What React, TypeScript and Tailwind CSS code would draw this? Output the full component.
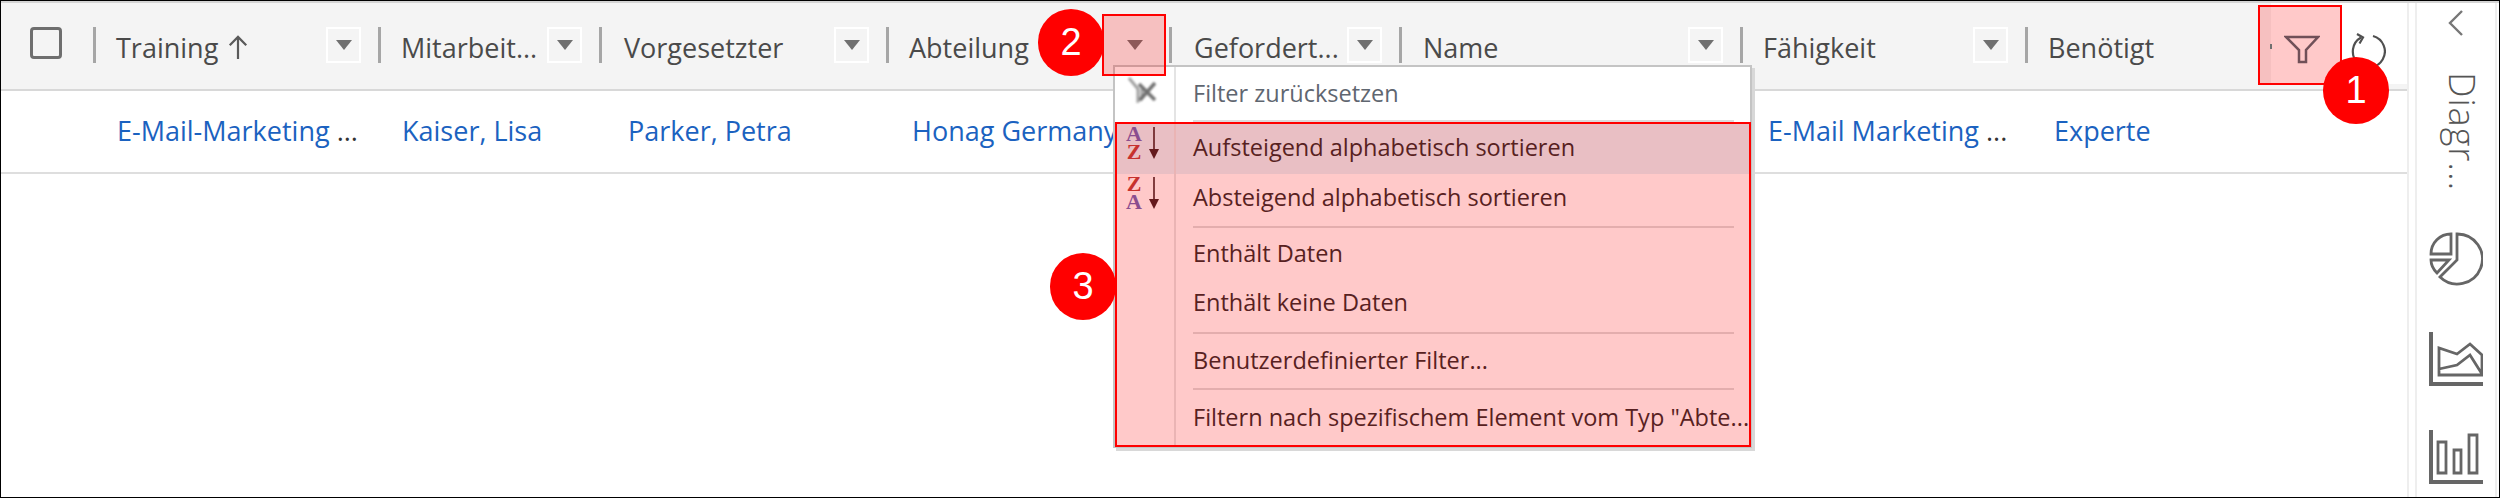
const columns = [
  { label: 'Training', width: 'w-[285px]', sorted: true, labelClass: 'ml-[20px]' },
  { label: 'Mitarbeit...', width: 'w-[221px]', labelClass: 'ml-[20px]' },
  { label: 'Vorgesetzter', width: 'w-[287px]', labelClass: 'ml-[22px]' },
  { label: 'Abteilung', width: 'w-[283px]', labelClass: 'ml-[20px]', noButton: true },
  { label: 'Gefordert...', width: 'w-[230px]', labelClass: 'ml-[22px]' },
  { label: 'Name', width: 'w-[341px]', labelClass: 'ml-[21px]' },
  { label: 'Fähigkeit', width: 'w-[285px]', labelClass: 'ml-[20px]' },
];

const cells = [
  { text: 'E-Mail-Marketing', ellipsis: true, width: 'w-[285px]', pad: 'pl-[24px]' },
  { text: 'Kaiser, Lisa', width: 'w-[221px]', pad: 'pl-[24px]' },
  { text: 'Parker, Petra', width: 'w-[287px]', pad: 'pl-[29px]' },
  { text: 'Honag Germany', width: 'w-[283px]', pad: 'pl-[26px]' },
  { text: '', width: 'w-[230px]', pad: '' },
  { text: '', width: 'w-[341px]', pad: '' },
  { text: 'E-Mail Marketing', ellipsis: true, width: 'w-[285px]', pad: 'pl-[28px]' },
  { text: 'Experte', width: 'w-[200px]', pad: 'pl-[29px]' },
];

function Triangle() {
  return <div className="h-0 w-0 border-x-[8px] border-t-[10px] border-x-transparent border-t-[#707070]" />;
}

function DropButton() {
  return (
    <div className="mb-[2px] mr-[17px] flex h-[36px] w-[35px] shrink-0 items-center justify-center border-2 border-white">
      <Triangle />
    </div>
  );
}

function Separator() {
  return <div className="mb-[2px] h-[36px] w-[3px] shrink-0 bg-[#a6a6a6]" />;
}

function Header() {
  return (
    <div className="flex h-[88px] items-center border-b-2 border-[#d8d8d8] bg-[#f4f4f4]">
      <div className="flex w-[92px] shrink-0 justify-center pr-[2px]">
        <div className="mb-[6px] h-[32px] w-[32px] rounded-[4px] border-[3px] border-[#6e6e6e]" />
      </div>
      {columns.map((col) => (
        <div key={col.label} className={`${col.width} flex shrink-0 items-center`}>
          <Separator />
          <span className={`${col.labelClass} mt-[4px] whitespace-nowrap text-[27px] font-medium text-[#4a4a4a]`}>
            {col.label}
          </span>
          {col.sorted && (
            <svg viewBox="0 0 24 28" className="ml-[9px] mt-[2px] h-[26px] w-[22px]" fill="none" stroke="#5a5a5a" strokeWidth="2.4">
              <path d="M12 27V3M3 12l9-9 9 9" />
            </svg>
          )}
          <div className="flex-1" />
          {col.noButton ? (
            <div className="mb-[2px] mr-[17px] flex h-[36px] w-[35px] shrink-0 items-center justify-center">
              <Triangle />
            </div>
          ) : (
            <DropButton />
          )}
        </div>
      ))}
      <div className="flex flex-1 items-center">
        <Separator />
        <span className="ml-[20px] mt-[4px] text-[27px] font-medium text-[#4a4a4a]">Benötigt</span>
      </div>
      <div className="flex h-[81px] w-[136px] shrink-0 items-center justify-end self-start bg-white pr-[21px] pt-[12px]">
        <svg viewBox="0 0 38 36" className="h-[36px] w-[38px]" fill="none" stroke="#505050" strokeWidth="2.2">
          <path d="M13 5.500A16 16 0 1 0 25 4" />
          <path d="M9 2l6 3.500-3.500 6" />
        </svg>
      </div>
    </div>
  );
}

function Row() {
  return (
    <div className="flex h-[83px] items-center border-b-2 border-[#dedede] bg-white">
      <div className="w-[92px] shrink-0" />
      {cells.map((cell, i) => (
        <div key={i} className={`${cell.width} ${cell.pad} shrink-0 whitespace-nowrap text-[27px] text-[#1b62c0]`}>
          {cell.text}
          {cell.ellipsis && <span className="text-[#333333]"> ...</span>}
        </div>
      ))}
    </div>
  );
}

function ClearFilterIcon() {
  return (
    <svg viewBox="0 0 30 26" className="h-[26px] w-[30px] blur-[0.8px]" fill="none">
      <path d="M1 1l9 11v12l4-3V12" stroke="#a0a0a0" strokeWidth="3" />
      <path d="M11 7l16 16M27 6L12 23" stroke="#707070" strokeWidth="3.5" />
    </svg>
  );
}

function SortIcon({ top, bottom, topClass, bottomClass }: { top: string; bottom: string; topClass: string; bottomClass: string }) {
  return (
    <div className="flex h-[36px] items-center">
      <div className="flex w-[17px] flex-col items-center font-['Liberation_Serif',serif] text-[22px] font-bold leading-[18px]">
        <span className={topClass}>{top}</span>
        <span className={bottomClass}>{bottom}</span>
      </div>
      <svg viewBox="0 0 12 33" className="ml-[5px] h-[33px] w-[12px]" fill="#3a2024">
        <path d="M5.200 0h1.600v24H5.200z" />
        <path d="M1 22h10l-5 10z" />
      </svg>
    </div>
  );
}

function MenuItem({ height, icon, children, iconClass = '', textClass = '' }: { height: string; icon?: React.ReactNode; children: React.ReactNode; iconClass?: string; textClass?: string }) {
  return (
    <div className={`${height} flex`}>
      <div className={`${iconClass} flex w-[61px] shrink-0 justify-center border-r-2 border-[#e4e4e4] pr-[4px]`}>{icon}</div>
      <div className={`${textClass} flex flex-1 items-center whitespace-nowrap pl-[17px] text-[23.5px]`}>{children}</div>
    </div>
  );
}

function MenuSeparator() {
  return (
    <div className="flex h-[2px]">
      <div className="w-[61px] shrink-0 border-r-2 border-[#e4e4e4]" />
      <div className="ml-[17px] mr-[16px] flex-1 bg-[#dcdcdc]" />
    </div>
  );
}

function FilterMenu() {
  return (
    <div className="absolute left-[1112px] top-[64px] flex h-[383px] w-[639px] flex-col border-2 border-[#c4c4c4] bg-white text-[#2a2a2a] shadow-[3px_3px_0_#d8d8d8]">
      <MenuItem height="h-[53px]" icon={<ClearFilterIcon />} iconClass="pt-[10px]">
        <span className="text-[#5f6670]">Filter zurücksetzen</span>
      </MenuItem>
      <MenuSeparator />
      <MenuItem
        height="h-[52px] bg-[#e3f2f9]"
        iconClass="pt-[3px]"
        icon={<SortIcon top="A" bottom="Z" topClass="text-[#6b63b5]" bottomClass="text-[#b8403a]" />}
      >
        Aufsteigend alphabetisch sortieren
      </MenuItem>
      <MenuItem
        height="h-[52px]"
        iconClass="pt-[1px]"
        textClass="pb-[4px]"
        icon={<SortIcon top="Z" bottom="A" topClass="text-[#b8403a]" bottomClass="text-[#6b63b5]" />}
      >
        Absteigend alphabetisch sortieren
      </MenuItem>
      <MenuSeparator />
      <MenuItem height="h-[52px]">Enthält Daten</MenuItem>
      <MenuItem height="h-[52px]" textClass="pb-[6px]">Enthält keine Daten</MenuItem>
      <MenuSeparator />
      <MenuItem height="h-[54px]">Benutzerdefinierter Filter...</MenuItem>
      <MenuSeparator />
      <MenuItem height="h-[56px]">Filtern nach spezifischem Element vom Typ "Abte...</MenuItem>
    </div>
  );
}

function Badge({ n, className }: { n: number; className: string }) {
  return (
    <div className={`${className} absolute flex h-[67px] w-[66px] items-center justify-center rounded-full bg-[#ff0000] font-['Liberation_Sans',sans-serif] text-[38px] text-white`}>
      {n}
    </div>
  );
}

function Sidebar() {
  return (
    <div className="flex w-[80px] shrink-0 flex-col items-center border-r-2 border-[#eeeeee] pt-[6px]">
      <svg viewBox="0 0 18 28" className="h-[28px] w-[18px]" fill="none" stroke="#777777" strokeWidth="2.4">
        <path d="M15 2L3 14l12 12" />
      </svg>
      <div className="ml-[12px] mt-[35px] h-[130px] text-[36px] font-light leading-none tracking-[1px] text-[#555555] [writing-mode:vertical-rl]">
        Diagr...
      </div>
      <svg viewBox="0 0 54 54" className="mt-[30px] h-[54px] w-[54px]" fill="none" stroke="#666666" strokeWidth="2.8">
        <path d="M22 2A20 20 0 0 0 2 22h20zM2 28h18L8 41C4 37 2 33 2 28z" />
        <path d="M28 2a25 25 0 1 1-17 43l17-17z" />
      </svg>
      <svg viewBox="0 0 54 54" className="mt-[46px] h-[54px] w-[54px]" fill="none" stroke="#666666" strokeWidth="2.8">
        <path d="M2 0v52h52" strokeWidth="4" />
        <path d="M10 43V16l18 6 13-10 12 11v20zM10 37l18-4 13-10 12 19" />
      </svg>
      <svg viewBox="0 0 54 54" className="mt-[44px] h-[54px] w-[54px]" fill="none" stroke="#666666" strokeWidth="2.8">
        <path d="M2 0v52h52" strokeWidth="4" />
        <path d="M9 12h8v31H9zM25 20h7v23h-7zM40 5h8v38h-8z" />
      </svg>
    </div>
  );
}

export default function App() {
  return (
    <div className="relative flex h-[498px] w-[2500px] flex-col border border-black bg-white font-['Open_Sans',sans-serif]">
      <div className="h-[2px] shrink-0 bg-[#d4d4d4]" />
      <div className="flex flex-1">
        <div className="w-[2406px] shrink-0">
          <Header />
          <Row />
        </div>
        <div className="w-[10px] shrink-0 border-x-2 border-[#eeeeee]" />
        <Sidebar />
      </div>

      <FilterMenu />

      {/* Callouts over the grid */}
      <div className="absolute left-[2257px] top-[4px] h-[80px] w-[84px] border-2 border-[#ff0000] bg-[#ff0000]/21">
        <div className="absolute left-[10px] top-[37px] h-[5px] w-[2px] bg-[#707070]" />
        <svg viewBox="0 0 36 30" className="ml-[24px] mt-[28px] h-[30px] w-[36px]" fill="none" stroke="#705058" strokeWidth="2.5">
          <path d="M2 2h32L22 15v12h-7V15z" />
        </svg>
      </div>
      <div className="absolute left-[1101px] top-[13px] h-[62px] w-[64px] border-2 border-[#ff0000] bg-[#ff0000]/21" />
      <div className="absolute left-[1114px] top-[121px] h-[325px] w-[636px] border-2 border-[#ff0000] bg-[#ff0000]/21" />
      <Badge n={1} className="left-[2322px] top-[56px]" />
      <Badge n={2} className="left-[1037px] top-[8px]" />
      <Badge n={3} className="left-[1049px] top-[252px]" />
    </div>
  );
}
